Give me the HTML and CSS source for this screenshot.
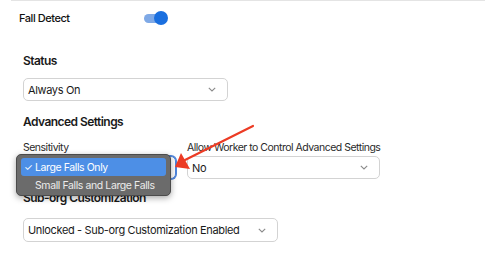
FILE: index.html
```html
<!DOCTYPE html>
<html>
<head>
<meta charset="utf-8">
<link rel="stylesheet" href="styles.css">
</head>
<body>
<div class="page">
  <div class="top-line"></div>
  <div class="fall-row">
    <span class="fall-label">Fall Detect</span>
    <span class="toggle"><span class="track"></span><span class="knob"></span></span>
  </div>
  <div class="section">
    <h3 class="heading h-status">Status</h3>
    <div class="select w-status"><span>Always On</span><svg class="chev" width="8" height="5" viewBox="0 0 8 5"><path d="M0.8 0.8 L4 4 L7.2 0.8" fill="none" stroke="#8a8a8a" stroke-width="1.1"/></svg></div>
    <h3 class="heading h-adv">Advanced Settings</h3>
    <div class="adv-row">
      <div class="field f-sens">
        <label class="label">Sensitivity</label>
        <div class="select focus"><span>Large Falls Only</span></div>
      </div>
      <div class="field f-allow">
        <label class="label">Allow Worker to Control Advanced Settings</label>
        <div class="select"><span>No</span><svg class="chev" width="8" height="5" viewBox="0 0 8 5"><path d="M0.8 0.8 L4 4 L7.2 0.8" fill="none" stroke="#8a8a8a" stroke-width="1.1"/></svg></div>
      </div>
    </div>
    <h3 class="heading h-sub">Sub-org Customization</h3>
    <div class="select w-sub"><span>Unlocked - Sub-org Customization Enabled</span><svg class="chev" width="8" height="5" viewBox="0 0 8 5"><path d="M0.8 0.8 L4 4 L7.2 0.8" fill="none" stroke="#8a8a8a" stroke-width="1.1"/></svg></div>
  </div>

  <div class="popup">
    <div class="item selected"><span class="check">✓</span>Large Falls Only</div>
    <div class="item"><span class="check"></span>Small Falls and Large Falls</div>
  </div>

  <svg class="arrow" width="485" height="262" viewBox="0 0 485 262">
    <line x1="253" y1="126" x2="185" y2="160" stroke="#ec3b24" stroke-width="2.2" stroke-linecap="round"/>
    <polygon points="175,167 181,153 190,169" fill="#ec3b24"/>
  </svg>
</div>
</body>
</html>
```
FILE: styles.css
```css
html, body {
  margin: 0;
  padding: 0;
  background: #ffffff;
}
body {
  font-family: Inter, "Liberation Sans", Arial, sans-serif;
  color: #1d1d1f;
  width: 485px;
  height: 262px;
  overflow: hidden;
}
.page {
  position: relative;
  width: 485px;
  height: 262px;
}
.top-line {
  margin-left: 11px;
  border-top: 1.5px solid #e4e4e4;
}
.fall-row {
  display: flex;
  align-items: center;
  padding-left: 19px;
  height: 34px;
}
.fall-label {
  width: 125px;
  font-size: 11px;
  font-weight: 500;
  letter-spacing: -0.45px;
  color: #111;
  white-space: nowrap;
}
.toggle {
  position: relative;
  width: 24px;
  height: 14px;
  display: inline-block;
}
.track {
  position: absolute;
  left: 0;
  top: 2.5px;
  width: 19px;
  height: 9px;
  border-radius: 5px;
  background: #7fa9e6;
}
.knob {
  position: absolute;
  right: 0;
  top: 0;
  width: 14px;
  height: 14px;
  border-radius: 50%;
  background: #1a6fdf;
}
.section {
  padding-left: 23px;
}
.heading {
  margin: 0;
  font-size: 12px;
  font-weight: 600;
  line-height: 16px;
  letter-spacing: -0.55px;
  color: #1a1a1a;
  white-space: nowrap;
}
.h-status { margin-top: 18px; }
.select {
  box-sizing: border-box;
  height: 23px;
  border: 1px solid #d3d3d3;
  border-radius: 5px;
  display: flex;
  align-items: center;
  justify-content: space-between;
  padding: 0 11px 0 4px;
  font-size: 11px;
  letter-spacing: -0.35px;
  color: #1a1a1a;
  background: #fff;
  white-space: nowrap;
}
.w-status { width: 205px; margin-top: 9px; }
.h-adv { margin-top: 13px; }
.adv-row {
  display: flex;
  gap: 11px;
  margin-top: 11px;
}
.field {
  display: flex;
  flex-direction: column;
}
.label {
  font-size: 10.5px;
  line-height: 13px;
  letter-spacing: -0.5px;
  color: #2a2a2a;
  margin-bottom: 2px;
  white-space: nowrap;
}
.f-sens { width: 153px; }
.f-allow { width: 193px; }
.focus {
  border: 1px solid #4d84dc;
  box-shadow: 0 0 0 1px #4d84dc;
}
.h-sub { margin-top: 11px; }
.w-sub { width: 255px; height: 24px; margin-top: 12px; }
.chev { display: block; }

.popup {
  position: absolute;
  left: 16px;
  top: 154px;
  width: 155px;
  height: 42px;
  box-sizing: border-box;
  background: #6b6b6b;
  border: 1px solid #4b4b4b;
  border-radius: 5px;
  box-shadow: 0 2px 6px rgba(0,0,0,0.35);
  padding: 3px 4px;
}
.item {
  height: 18px;
  display: flex;
  align-items: center;
  font-size: 10.5px;
  letter-spacing: -0.4px;
  color: #ececec;
  border-radius: 3px;
  padding-left: 3px;
  white-space: nowrap;
}
.item.selected {
  background: #4d8fe6;
  color: #ffffff;
}
.check {
  width: 11px;
  font-size: 10px;
  display: inline-block;
}
.arrow {
  position: absolute;
  left: 0;
  top: 0;
}
```
